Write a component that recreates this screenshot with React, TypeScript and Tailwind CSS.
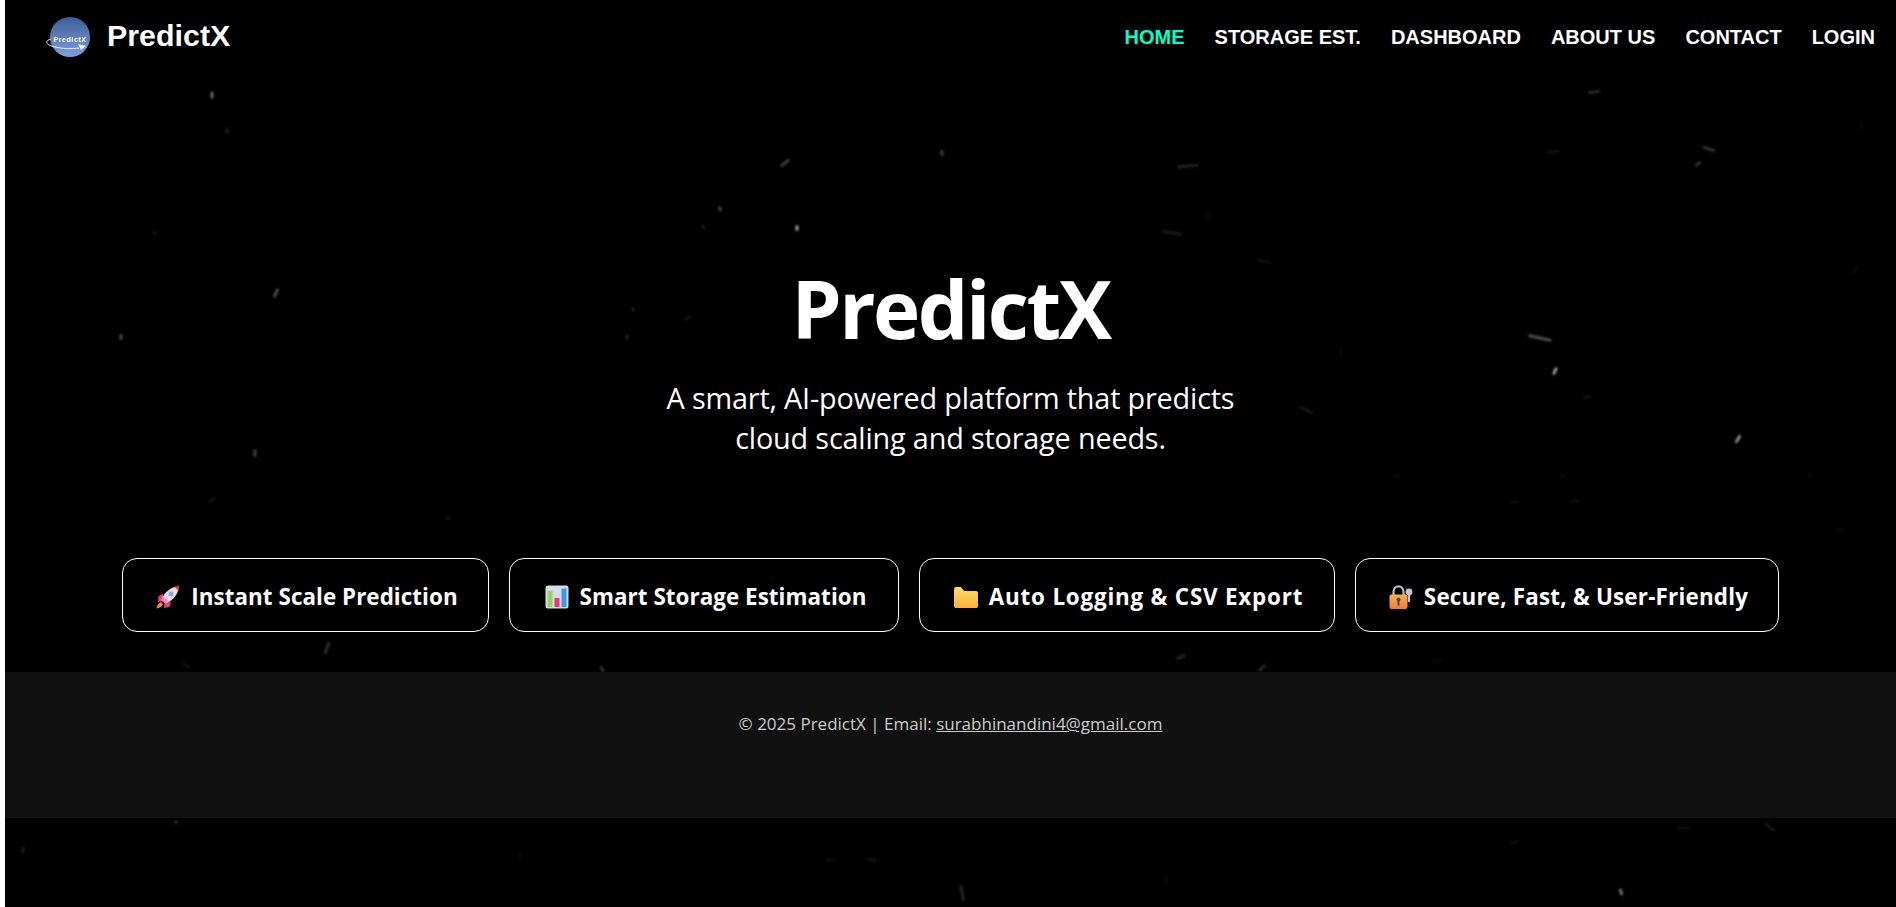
import React from "react";

// faint streaks of the star-field backdrop: x, y, length, angle, opacity
const specks: [number, number, number, number, number][] = [
  [212, 95, 7, 90, 0.42], [227, 131, 6, 100, 0.12], [785, 163, 11, -40, 0.25], [942, 153, 6, 80, 0.25],
  [720, 209, 5, 80, 0.3], [797, 228, 6, 90, 0.6], [703, 227, 5, 90, 0.12], [276, 293, 10, -65, 0.3],
  [121, 337, 6, 90, 0.3], [633, 309, 4, 90, 0.14], [627, 337, 5, 90, 0.14], [688, 318, 9, -30, 0.07],
  [255, 453, 8, 90, 0.25], [212, 500, 8, -35, 0.07], [448, 518, 5, 0, 0.09], [155, 233, 5, 60, 0.07],
  [1594, 92, 12, -8, 0.18], [1188, 166, 22, -5, 0.13], [1709, 149, 13, 18, 0.2], [1698, 164, 7, -40, 0.2],
  [1553, 152, 14, -5, 0.07], [1172, 233, 20, 10, 0.1], [1264, 261, 14, 10, 0.06], [1540, 338, 24, 12, 0.3],
  [1555, 371, 8, -65, 0.6], [1738, 439, 9, -60, 0.55], [1306, 410, 16, 25, 0.09], [1587, 397, 8, 0, 0.07],
  [1208, 216, 4, 90, 0.07], [1341, 352, 5, 90, 0.06], [1861, 127, 7, 90, 0.04], [1855, 270, 7, -60, 0.05],
  [1840, 530, 8, 0, 0.05], [1562, 476, 6, 0, 0.05], [1397, 476, 8, 0, 0.05], [1810, 475, 5, 90, 0.05],
  [1575, 501, 9, -5, 0.05], [1514, 502, 8, -5, 0.05], [327, 648, 13, -70, 0.18], [186, 665, 10, 30, 0.06],
  [602, 669, 7, 60, 0.2], [1181, 657, 10, -25, 0.14], [1262, 668, 9, -45, 0.16], [1437, 661, 12, 0, 0.04],
  [176, 822, 4, 0, 0.2], [23, 850, 6, 90, 0.12], [872, 860, 9, 10, 0.07], [830, 860, 9, 0, 0.06],
  [962, 893, 16, 80, 0.15], [520, 855, 6, 90, 0.04], [1683, 828, 14, 0, 0.06], [1770, 827, 13, 40, 0.09],
  [1514, 842, 10, -15, 0.04], [1621, 892, 7, 75, 0.45], [1166, 880, 5, 90, 0.05],
];

const Backdrop = () => (
  <svg className="absolute inset-0 h-full w-full blur-[1.1px]" viewBox="0 0 1891 907" aria-hidden="true">
    {specks.map(([x, y, len, angle, opacity], i) => (
      <rect
        key={i}
        x={x - 5 - len / 2}
        y={y - 1.5}
        width={len}
        height={3}
        rx={1.5}
        fill="#fff"
        opacity={opacity}
        transform={`rotate(${angle} ${x - 5} ${y})`}
      />
    ))}
  </svg>
);

const Logo = () => (
  <svg className="h-[44px] w-[48px]" viewBox="0 0 48 44">
    <defs>
      <linearGradient id="globe" x1="0" y1="0" x2="0" y2="1">
        <stop offset="0" stopColor="#3d5e97" />
        <stop offset="1" stopColor="#7f9fdc" />
      </linearGradient>
    </defs>
    <circle cx="25" cy="22" r="20" fill="url(#globe)" />
    <text x="25" y="27" textAnchor="middle" fill="#fff" fontSize="7" fontWeight="700" fontFamily="'Liberation Sans', sans-serif" letterSpacing="0.6">
      PredictX
    </text>
    <path d="M6 24 C-1 26 1 30 10 32 C18 34 27 34 34 33" fill="none" stroke="#e6edf8" strokeWidth="1" />
    <path d="M33 29 L41 31 L36 35 Z" fill="#eef3fb" />
  </svg>
);

const Rocket = () => (
  <svg className="h-[24px] w-[24px]" viewBox="0 0 24 24">
    <path d="M5 17 C2 18 1 21 0.5 23.5 C3 23 6 22 7 19 Z" fill="#f08a3c" />
    <path d="M7 9 L2.5 11 L2 17 L7 16 Z" fill="#ea3d7c" />
    <path d="M15 17 L13.5 22 L8 23 L8.5 18 Z" fill="#ea3d7c" />
    <path d="M5.5 15 C7 9 13 3.5 20 1.5 L22.5 4 C21 11 15.5 17 9 18.5 Z" fill="#f3dbe6" />
    <path d="M5.5 15 L9 18.5 L13 17 L7 11.5 Z" fill="#f58bb0" />
    <circle cx="15" cy="9" r="2.8" fill="#7fa8e4" stroke="#c9d4ea" />
    <path d="M18.5 2 L23.5 0.5 L22.5 5.5 Z" fill="#e5325f" />
  </svg>
);

const BarChart = () => (
  <svg className="h-[24px] w-[24px]" viewBox="0 0 24 24">
    <rect x="0.5" y="0.5" width="23" height="23" rx="2.5" fill="#dcd9e6" />
    <rect x="2.5" y="6" width="5" height="16" fill="#93d36a" />
    <rect x="9.5" y="13" width="5" height="9" fill="#e5386f" />
    <rect x="16.5" y="3.5" width="5" height="18.5" fill="#2f9fe8" />
  </svg>
);

const Folder = () => (
  <svg className="h-[24px] w-[24px]" viewBox="0 0 24 24">
    <defs>
      <linearGradient id="folder" x1="0" y1="0" x2="0" y2="1">
        <stop offset="0" stopColor="#ffdc66" />
        <stop offset="1" stopColor="#fbb040" />
      </linearGradient>
    </defs>
    <path d="M0 5 C0 3 1 2 2 2 H7 L10 6 H22 C23.5 6 24 7 24 8 V21 C24 22.5 23 23 22 23 H2 C1 23 0 22.5 0 21 Z" fill="url(#folder)" />
  </svg>
);

const LockKey = () => (
  <svg className="h-[24px] w-[24px]" viewBox="0 0 24 24">
    <defs>
      <linearGradient id="lock" x1="0" y1="0" x2="0" y2="1">
        <stop offset="0" stopColor="#fbb347" />
        <stop offset="1" stopColor="#ef7b3c" />
      </linearGradient>
    </defs>
    <path d="M4.5 11 V7 C4.5 -0.5 14.5 -0.5 14.5 7 V11" fill="none" stroke="#b9b6c6" strokeWidth="2.2" />
    <circle cx="20" cy="7" r="3.4" fill="#c8c4d4" />
    <rect x="18.9" y="8" width="2.2" height="9" fill="#c8c4d4" />
    <rect x="0.5" y="9.5" width="18" height="14.5" rx="2" fill="url(#lock)" />
    <circle cx="9.5" cy="14.5" r="2" fill="#4a4450" />
    <rect x="8.5" y="15" width="2" height="5.5" fill="#4a4450" />
  </svg>
);

const features = [
  { icon: <Rocket />, label: "Instant Scale Prediction", w: "w-[367px] tracking-[0.05px]" },
  { icon: <BarChart />, label: "Smart Storage Estimation", w: "w-[390px] tracking-[0.05px]" },
  { icon: <Folder />, label: "Auto Logging & CSV Export", w: "w-[416px] tracking-[0.8px]" },
  { icon: <LockKey />, label: "Secure, Fast, & User-Friendly", w: "w-[424px] tracking-[0.2px]" },
];

const navLinks = ["HOME", "STORAGE EST.", "DASHBOARD", "ABOUT US", "CONTACT", "LOGIN"];

export default function App() {
  return (
    <div className="flex min-h-[907px] bg-white font-['Open_Sans','Noto_Sans',sans-serif]">
      <div className="relative ml-[5px] h-[907px] w-full overflow-hidden bg-black text-white">
        <Backdrop />

        <div className="relative flex h-full flex-col">
          <nav className="flex h-[74px] items-center justify-between pl-[40px] pr-[21px] font-['Liberation_Sans',Arial,sans-serif]">
            <div className="flex items-center gap-[14px]">
              <Logo />
              <span className="-mt-[2px] text-[30.4px] font-bold">PredictX</span>
            </div>
            <ul className="flex gap-[30px] text-[20px] font-bold">
              {navLinks.map((link, i) => (
                <li key={link} className={i === 0 ? "text-[#00ffcc]" : "text-white"}>
                  {link}
                </li>
              ))}
            </ul>
          </nav>

          <section className="mt-[184px] flex flex-col items-center text-center">
            <h1 className="text-[80px] leading-[100px] font-bold tracking-[-2.5px]">PredictX</h1>
            <p className="mt-[20px] w-[600px] text-[28.8px] leading-[40px] tracking-[-0.17px]">
              A smart, AI-powered platform that predicts cloud scaling and storage needs.
            </p>
          </section>

          <div className="mt-[100px] flex justify-center gap-[20px]">
            {features.map((f) => (
              <div
                key={f.label}
                className={`flex h-[74px] items-center justify-center gap-[11px] rounded-[15px] border border-white bg-black pt-[3px] pl-[3px] text-[22.4px] font-bold ${f.w}`}
              >
                {f.icon}
                <span>{f.label}</span>
              </div>
            ))}
          </div>

          <footer className="mt-[40px] h-[146px] bg-[#111] pt-[40px] text-center text-[17px] leading-[24px] text-[#ccc]">
            © 2025 PredictX | Email: <a className="underline">surabhinandini4@gmail.com</a>
          </footer>
        </div>
      </div>
    </div>
  );
}
